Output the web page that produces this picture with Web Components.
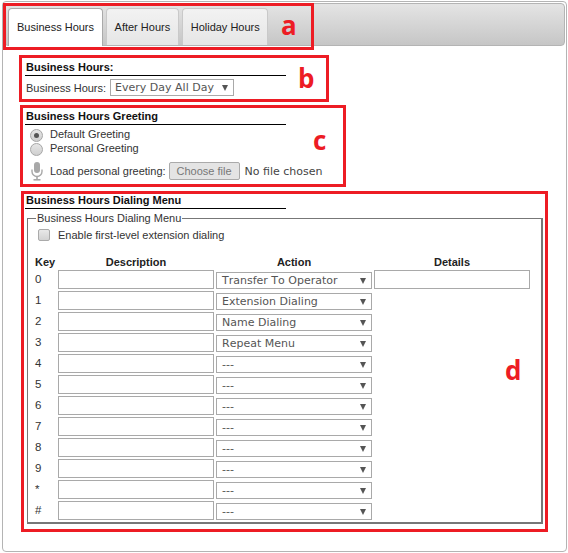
<!DOCTYPE html>
<html>
<head>
<meta charset="utf-8">
<style>
  html, body { margin: 0; background: #fff; }
  body { font: 11px "Liberation Sans", Arial, sans-serif; color: #222; }
</style>
</head>
<body>
<template id="tab-bar-tpl">
  <style>
    :host { display: flex; gap: 3px; height: 43px; box-sizing: border-box; padding: 4px 0 0 3px; margin: 1px 1px 0 1px;
      border: 1px solid #b4b4b4; border-radius: 4px; background: linear-gradient(#e4e4e4, #c6c6c6); }
  </style>
  <slot></slot>
</template>
<template id="tab-item-tpl">
  <style>
    :host { display: block; box-sizing: border-box; height: 37px; padding: 0 7.5px 0 8px; line-height: 36px;
      font-size: 11px; color: #222; border: 1px solid #c9c9c9; border-bottom: 0; border-radius: 4px 4px 0 0;
      background: linear-gradient(#f2f2f2, #e6e6e6); }
    :host([active]) { background: #fff; border-color: #aaa; height: 38px; margin-bottom: -1px; }
  </style>
  <slot></slot>
</template>
<template id="form-section-tpl">
  <style>
    :host { display: block; }
    h3 { margin: 0; width: 260px; border-bottom: 1px solid #000; font: bold 11px/14px "Liberation Sans", Arial, sans-serif;
      color: #111; padding-left: 1px; height: 15px; box-sizing: content-box; }
  </style>
  <h3></h3>
  <slot></slot>
</template>
<template id="drop-down-tpl">
  <style>
    :host { display: inline-flex; box-sizing: border-box; align-items: center; justify-content: space-between;
      height: 17px; width: 156px; border: 1px solid #a9a9a9; background: #fff; padding: 0 5px 0 4px;
      font: 11px "DejaVu Sans", Verdana, sans-serif; font-kerning: none; color: #555; }
    i { width: 0; height: 0; border: 3.5px solid transparent; border-top: 6px solid #555; border-bottom: 0; }
  </style>
  <span><slot></slot></span><i></i>
</template>
<template id="text-box-tpl">
  <style>
    :host { display: block; box-sizing: border-box; height: 19px; width: 156px; border: 1px solid #a9a9a9; background: #fff; }
  </style>
</template>
<template id="radio-dot-tpl">
  <style>
    :host { display: inline-block; box-sizing: border-box; width: 13px; height: 13px; border-radius: 50%;
      border: 1px solid #a6a6a6; background: linear-gradient(#e6e6e6, #cfcfcf); position: relative; }
    :host([checked])::after { content: ""; position: absolute; left: 3px; top: 3px; width: 5px; height: 5px;
      border-radius: 50%; background: #555; }
  </style>
</template>
<template id="dial-row-tpl">
  <style>
    :host { display: grid; grid-template-columns: 21px 156px 156px 156px; column-gap: 2px; height: 21px; align-items: start; }
    .key { color: #333; padding-top: 2px; line-height: 14px; font-size: 11.5px; }
    drop-down { margin-top: 2px; padding-left: 5px; }
  </style>
  <div class="key"></div>
  <text-box></text-box>
  <drop-down></drop-down>
  <slot></slot>
</template>
<template id="mark-box-tpl">
  <style>
    :host { position: absolute; box-sizing: border-box; border: 3px solid #ed1c24; pointer-events: none; }
    span { position: absolute; font: bold 26px/26px "Open Sans", sans-serif; color: #ed1c24; }
  </style>
  <span></span>
</template>
<template id="hours-panel-tpl">
  <style>
    :host { display: block; position: relative; width: 568px; height: 553px; box-sizing: border-box; padding: 1px 1px 0 2px; }
    .outer { height: 551px; box-sizing: border-box; border: 1px solid #b4b4b4; border-radius: 4px; }
    .body { padding: 14px 0 0 22px; }
    .pick { display: flex; align-items: center; gap: 4px; margin: 3px 0 0 1px; height: 17px; color: #333; }
    .pick drop-down { width: 124px; }
    .greeting { margin-top: 13px; }
    .radios { display: grid; grid-template-columns: 13px auto; grid-auto-rows: 13px; column-gap: 7px; row-gap: 1px; margin: 3px 0 0 5px; color: #333; line-height: 13px; }
    .radios radio-dot { margin-top: 1px; }
    .load { display: flex; align-items: center; height: 20px; margin: 6px 0 0 6px; color: #333; }
    .load svg { margin-right: 7px; }
    .btn { box-sizing: border-box; height: 18px; width: 71px; margin-left: 3px; text-align: center; line-height: 16px;
      border: 1px solid #aaa; border-radius: 2px; background: #e4e4e4; color: #777; font-size: 11px; }
    .nofile { margin-left: 5px; font: 11px "DejaVu Sans", Verdana, sans-serif; color: #444; }
    .dialing { margin-top: 12px; }
    fieldset { margin: 4px 0 0 2px; padding: 0 0 0 7px; width: 516px; height: 311px; box-sizing: border-box;
      border: 2px solid #777; border-top-width: 1px; border-left-width: 1px; }
    legend { padding: 0 1px; margin-left: 1px; line-height: 11px; font-size: 11px; color: #333; }
    .enable { display: flex; align-items: center; gap: 8px; margin: 4px 0 0 3px; height: 14px; color: #333; }
    .box { width: 12px; height: 12px; box-sizing: border-box; border: 1px solid #aaa; border-radius: 2px; background: linear-gradient(#e8e8e8, #d2d2d2); }
    .head { display: grid; grid-template-columns: 21px 156px 156px 156px; column-gap: 2px; margin-top: 13px; height: 14px;
      font-weight: bold; line-height: 14px; color: #222; text-align: center; }
    .head span:first-child { text-align: left; }
    .rows { margin-top: 1px; }
  </style>
  <div class="outer">
    <tab-bar>
      <tab-item active>Business Hours</tab-item>
      <tab-item>After Hours</tab-item>
      <tab-item>Holiday Hours</tab-item>
    </tab-bar>
    <div class="body">
      <form-section title="Business Hours:">
        <div class="pick">Business Hours: <drop-down>Every Day All Day</drop-down></div>
      </form-section>
      <form-section class="greeting" title="Business Hours Greeting">
        <div class="radios">
          <radio-dot checked></radio-dot><span>Default Greeting</span>
          <radio-dot></radio-dot><span>Personal Greeting</span>
        </div>
        <div class="load">
          <svg width="12" height="19" viewBox="0 0 12 19" fill="#a8a8a8">
            <rect x="3" y="0" width="6" height="11" rx="3"/>
            <path d="M1 7.5v2a5 5 0 0 0 10 0v-2" fill="none" stroke="#a8a8a8" stroke-width="1.4"/>
            <rect x="5.2" y="14" width="1.6" height="3.4"/>
            <rect x="2.5" y="17" width="7" height="1.6"/>
          </svg>
          <span>Load personal greeting:</span><span class="btn">Choose file</span><span class="nofile">No file chosen</span>
        </div>
      </form-section>
      <form-section class="dialing" title="Business Hours Dialing Menu">
        <fieldset>
          <legend>Business Hours Dialing Menu</legend>
          <div class="enable"><span class="box"></span>Enable first-level extension dialing</div>
          <div class="head"><span>Key</span><span>Description</span><span>Action</span><span>Details</span></div>
          <div class="rows">
            <dial-row key="0" action="Transfer To Operator"><text-box></text-box></dial-row>
            <dial-row key="1" action="Extension Dialing"></dial-row>
            <dial-row key="2" action="Name Dialing"></dial-row>
            <dial-row key="3" action="Repeat Menu"></dial-row>
            <dial-row key="4" action="---"></dial-row>
            <dial-row key="5" action="---"></dial-row>
            <dial-row key="6" action="---"></dial-row>
            <dial-row key="7" action="---"></dial-row>
            <dial-row key="8" action="---"></dial-row>
            <dial-row key="9" action="---"></dial-row>
            <dial-row key="*" action="---"></dial-row>
            <dial-row key="#" action="---"></dial-row>
          </div>
        </fieldset>
      </form-section>
    </div>
  </div>
  <mark-box letter="a" style="left:3px;top:3px;width:311px;height:47px" lx="275" ly="6"></mark-box>
  <mark-box letter="b" style="left:19px;top:55px;width:310px;height:47px" lx="276" ly="7"></mark-box>
  <mark-box letter="c" style="left:20px;top:105px;width:326px;height:82px" lx="290" ly="19"></mark-box>
  <mark-box letter="d" style="left:21px;top:191px;width:527px;height:341px" lx="481" ly="163"></mark-box>
</template>
<script>
  function shadow(el, id) {
    el.attachShadow({ mode: 'open' }).appendChild(document.getElementById(id).content.cloneNode(true));
    return el.shadowRoot;
  }

  class TabBar extends HTMLElement { connectedCallback() { shadow(this, 'tab-bar-tpl'); } }
  class TabItem extends HTMLElement { connectedCallback() { shadow(this, 'tab-item-tpl'); } }
  class DropDown extends HTMLElement { connectedCallback() { shadow(this, 'drop-down-tpl'); } }
  class TextBox extends HTMLElement { connectedCallback() { shadow(this, 'text-box-tpl'); } }
  class RadioDot extends HTMLElement { connectedCallback() { shadow(this, 'radio-dot-tpl'); } }

  class FormSection extends HTMLElement {
    connectedCallback() {
      shadow(this, 'form-section-tpl').querySelector('h3').textContent = this.getAttribute('title');
      this.removeAttribute('title');
    }
  }

  class DialRow extends HTMLElement {
    connectedCallback() {
      const root = shadow(this, 'dial-row-tpl');
      root.querySelector('.key').textContent = this.getAttribute('key');
      root.querySelector('drop-down').textContent = this.getAttribute('action');
    }
  }

  class MarkBox extends HTMLElement {
    connectedCallback() {
      const span = shadow(this, 'mark-box-tpl').querySelector('span');
      span.textContent = this.getAttribute('letter');
      span.style.left = this.getAttribute('lx') + 'px';
      span.style.top = this.getAttribute('ly') + 'px';
    }
  }

  class HoursPanel extends HTMLElement { connectedCallback() { shadow(this, 'hours-panel-tpl'); } }

  customElements.define('tab-bar', TabBar);
  customElements.define('tab-item', TabItem);
  customElements.define('drop-down', DropDown);
  customElements.define('text-box', TextBox);
  customElements.define('radio-dot', RadioDot);
  customElements.define('form-section', FormSection);
  customElements.define('dial-row', DialRow);
  customElements.define('mark-box', MarkBox);
  customElements.define('hours-panel', HoursPanel);
</script>
<hours-panel></hours-panel>
</body>
</html>
